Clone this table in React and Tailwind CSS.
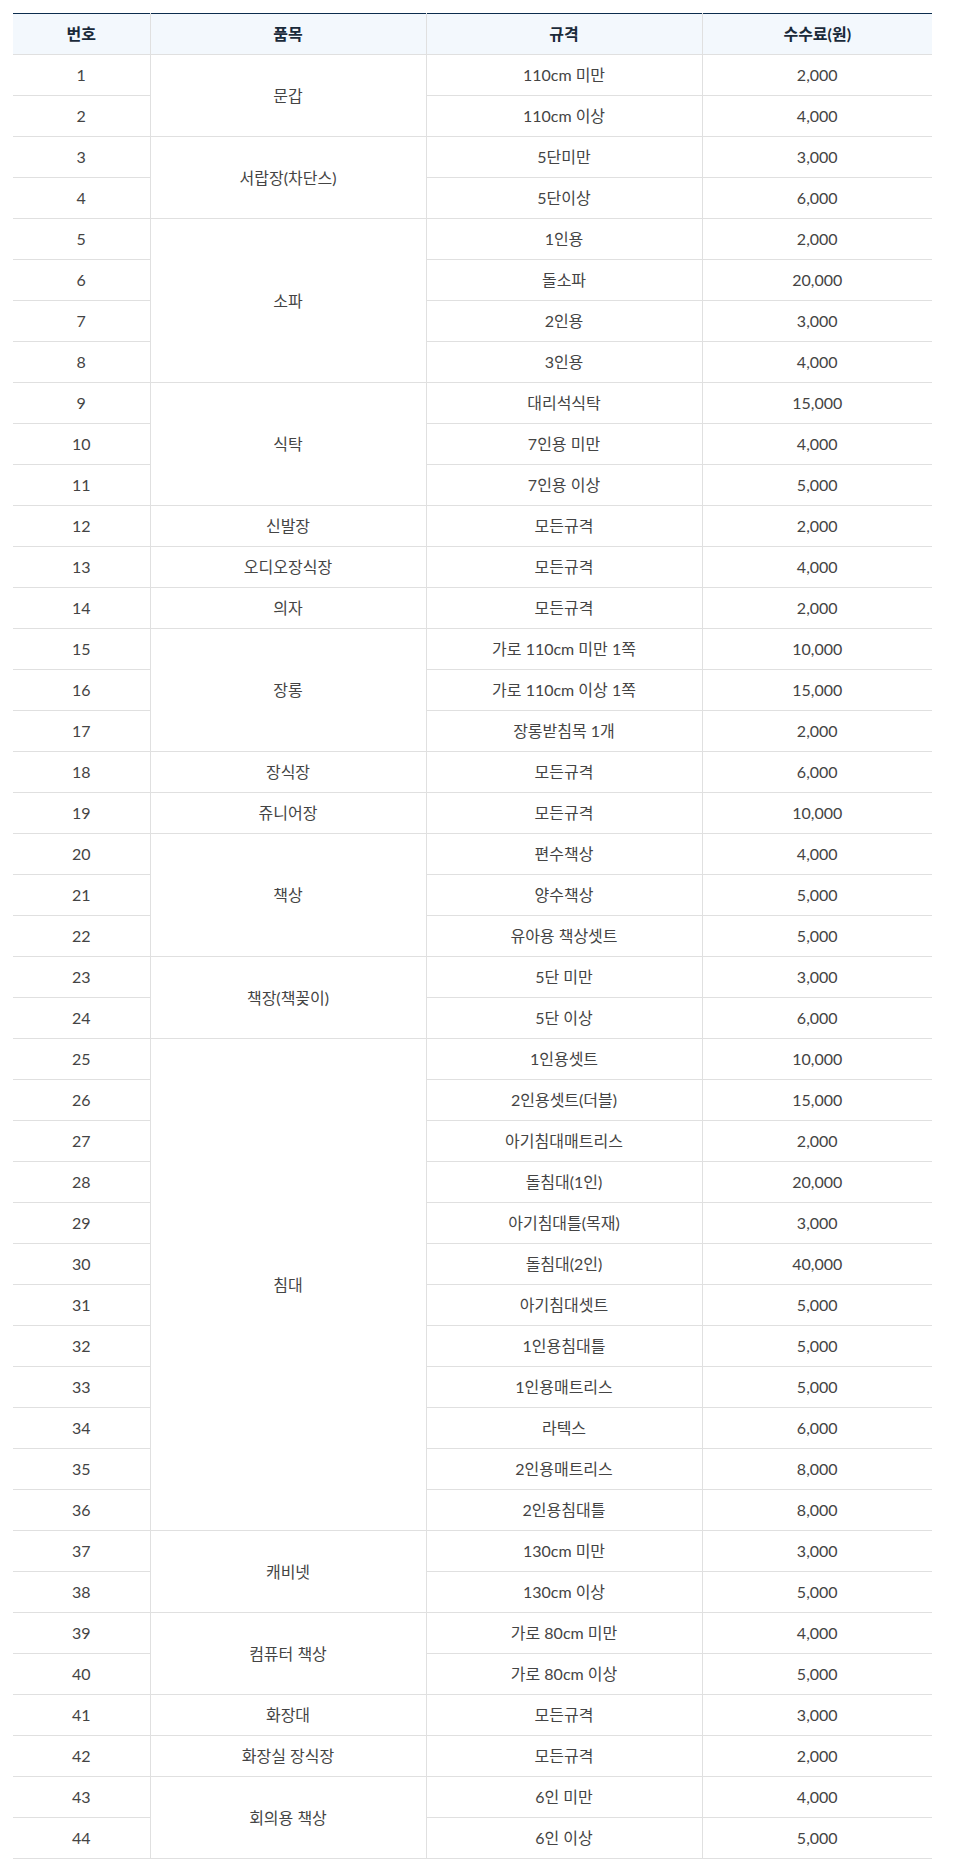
const groups = [
  ['문갑', [['110cm 미만', '2,000'], ['110cm 이상', '4,000']]],
  ['서랍장(차단스)', [['5단미만', '3,000'], ['5단이상', '6,000']]],
  ['소파', [['1인용', '2,000'], ['돌소파', '20,000'], ['2인용', '3,000'], ['3인용', '4,000']]],
  ['식탁', [['대리석식탁', '15,000'], ['7인용 미만', '4,000'], ['7인용 이상', '5,000']]],
  ['신발장', [['모든규격', '2,000']]],
  ['오디오장식장', [['모든규격', '4,000']]],
  ['의자', [['모든규격', '2,000']]],
  ['장롱', [['가로 110cm 미만 1쪽', '10,000'], ['가로 110cm 이상 1쪽', '15,000'], ['장롱받침목 1개', '2,000']]],
  ['장식장', [['모든규격', '6,000']]],
  ['쥬니어장', [['모든규격', '10,000']]],
  ['책상', [['편수책상', '4,000'], ['양수책상', '5,000'], ['유아용 책상셋트', '5,000']]],
  ['책장(책꽂이)', [['5단 미만', '3,000'], ['5단 이상', '6,000']]],
  ['침대', [
    ['1인용셋트', '10,000'], ['2인용셋트(더블)', '15,000'], ['아기침대매트리스', '2,000'],
    ['돌침대(1인)', '20,000'], ['아기침대틀(목재)', '3,000'], ['돌침대(2인)', '40,000'],
    ['아기침대셋트', '5,000'], ['1인용침대틀', '5,000'], ['1인용매트리스', '5,000'],
    ['라텍스', '6,000'], ['2인용매트리스', '8,000'], ['2인용침대틀', '8,000'],
  ]],
  ['캐비넷', [['130cm 미만', '3,000'], ['130cm 이상', '5,000']]],
  ['컴퓨터 책상', [['가로 80cm 미만', '4,000'], ['가로 80cm 이상', '5,000']]],
  ['화장대', [['모든규격', '3,000']]],
  ['화장실 장식장', [['모든규격', '2,000']]],
  ['회의용 책상', [['6인 미만', '4,000'], ['6인 이상', '5,000']]],
]

const td = 'h-[41px] border border-[#e0e0e0] p-0 text-center align-middle'

function App() {
  let n = 0
  const rows = []
  groups.forEach(([name, specs]) => {
    specs.forEach(([spec, fee], i) => {
      n += 1
      rows.push(
        <tr key={n}>
          <td className={td + ' border-l-0'}>{n}</td>
          {i === 0 && (
            <td className={td} rowSpan={specs.length}>
              {name}
            </td>
          )}
          <td className={td}>{spec}</td>
          <td className={td + ' border-r-0'}>{fee}</td>
        </tr>
      )
    })
  })

  return (
    <div className="bg-white pl-[13px] pt-[13px] pb-[10px]" style={{ fontFamily: 'Lato, "Noto Sans CJK KR", sans-serif' }}>
      <table className="w-[919px] table-fixed border-collapse border-t border-t-[#0c2d4e] text-[16px] text-[#444]">
        <colgroup>
          <col className="w-[137px]" />
          <col className="w-[276px]" />
          <col className="w-[276px]" />
          <col className="w-[230px]" />
        </colgroup>
        <thead>
          <tr className="bg-[#f3f8fd] text-[#1a2a3a]">
            <th className={td + ' border-t-[#0c2d4e] border-l-0 font-bold'}>번호</th>
            <th className={td + ' border-t-[#0c2d4e] font-bold'}>품목</th>
            <th className={td + ' border-t-[#0c2d4e] font-bold'}>규격</th>
            <th className={td + ' border-t-[#0c2d4e] border-r-0 font-bold'}>수수료(원)</th>
          </tr>
        </thead>
        <tbody>{rows}</tbody>
      </table>
    </div>
  )
}

export default App
